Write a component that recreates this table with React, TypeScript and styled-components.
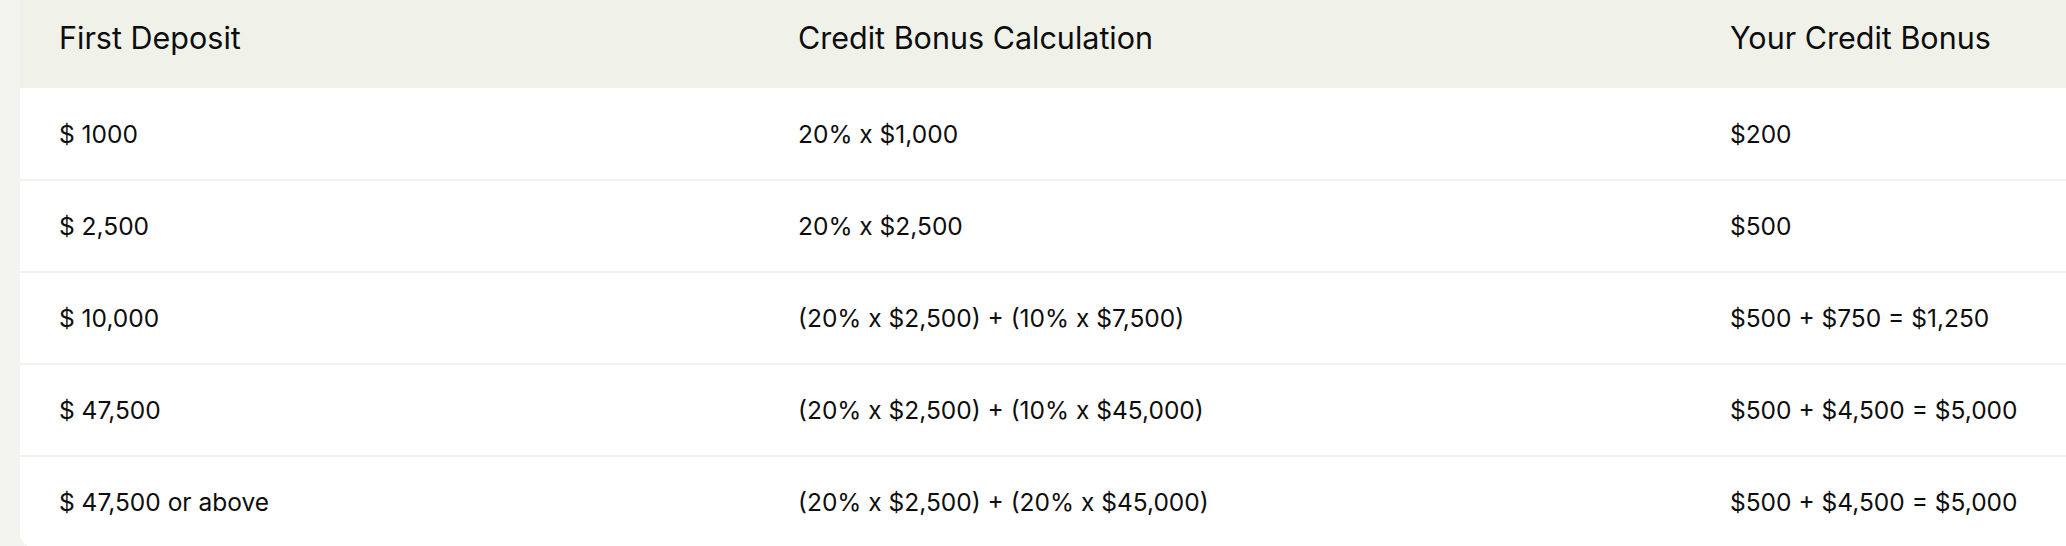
import React from "react";
import styled, { createGlobalStyle } from "styled-components";

const GlobalStyle = createGlobalStyle`
  html, body {
    margin: 0;
    padding: 0;
    background: #f3f3ef;
    overflow: hidden;
  }
  body {
    font-family: Inter, "Liberation Sans", sans-serif;
    color: #0d0d0d;
    -webkit-font-smoothing: antialiased;
  }
`;

const Page = styled.div`
  width: 2066px;
  height: 546px;
  padding-left: 20px;
  box-sizing: border-box;
  overflow: hidden;
`;

const Table = styled.div`
  width: 2120px;
  background: #ffffff;
  border-radius: 0 0 0 14px;
  overflow: hidden;
`;

const Row = styled.div<{ $head?: boolean }>`
  display: grid;
  grid-template-columns: 739px 932px 1fr;
  align-items: center;
  height: ${(p) => (p.$head ? "88px" : "90px")};
  background: ${(p) => (p.$head ? "#f0f2ea" : "#ffffff")};
  border-top: ${(p) => (p.$head ? "none" : "2px solid #f1f2ec")};
  &:nth-child(2) {
    border-top: none;
    height: 91px;
  }
`;

const Cell = styled.div<{ $head?: boolean }>`
  padding-left: 39px;
  font-size: ${(p) => (p.$head ? "30.5px" : "24.5px")};
  font-weight: 400;
  letter-spacing: 0;
  white-space: nowrap;
  ${(p) => (p.$head ? "transform: translateY(-7px);" : "")}
`;

const headers = ["First Deposit", "Credit Bonus Calculation", "Your Credit Bonus"];

const rows = [
  ["$ 1000", "20% x $1,000", "$200"],
  ["$ 2,500", "20% x $2,500", "$500"],
  ["$ 10,000", "(20% x $2,500) + (10% x $7,500)", "$500 + $750 = $1,250"],
  ["$ 47,500", "(20% x $2,500) + (10% x $45,000)", "$500 + $4,500 = $5,000"],
  ["$ 47,500 or above", "(20% x $2,500) + (20% x $45,000)", "$500 + $4,500 = $5,000"],
];

export default function App() {
  return (
    <>
      <GlobalStyle />
      <Page>
        <Table>
          <Row $head>
            {headers.map((h) => (
              <Cell $head key={h}>
                {h}
              </Cell>
            ))}
          </Row>
          {rows.map((r, i) => (
            <Row key={i}>
              {r.map((c, j) => (
                <Cell key={j}>{c}</Cell>
              ))}
            </Row>
          ))}
        </Table>
      </Page>
    </>
  );
}
